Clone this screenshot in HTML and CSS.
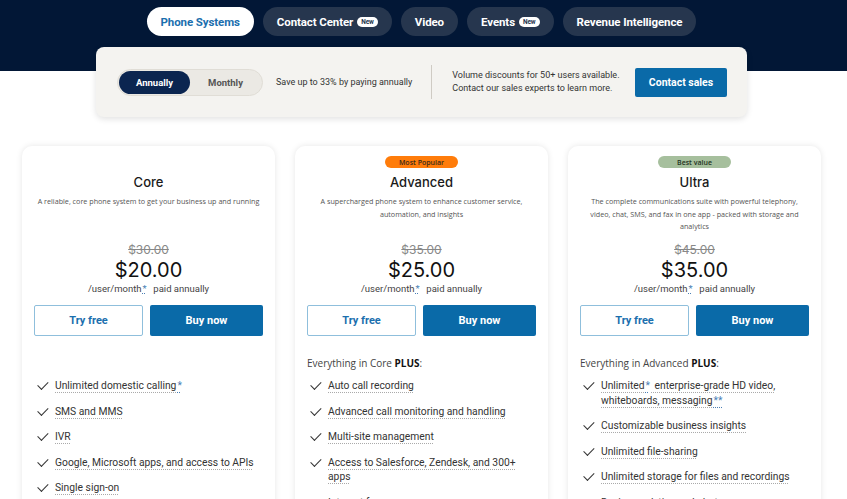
FILE: index.html
```html
<!DOCTYPE html>
<html>
<head>
<meta charset="utf-8">
<link rel="stylesheet" href="styles.css">
</head>
<body>
<header class="band">
  <div class="wrap">
    <nav class="tabs">
      <a class="tab active">Phone Systems</a>
      <a class="tab">Contact Center <span class="new">New</span></a>
      <a class="tab">Video</a>
      <a class="tab">Events <span class="new">New</span></a>
      <a class="tab">Revenue Intelligence</a>
    </nav>
  </div>
</header>
<main class="wrap">
  <section class="panel">
    <div class="toggle">
      <span class="opt on">Annually</span>
      <span class="opt">Monthly</span>
    </div>
    <p class="save">Save up to 33% by paying annually</p>
    <div class="divider"></div>
    <p class="volume">Volume discounts for 50+ users available.<br>Contact our sales experts to learn more.</p>
    <a class="contact">Contact sales</a>
  </section>

  <section class="cards">
    <article class="card">
      <div class="badge-row"></div>
      <h2 class="title">Core</h2>
      <p class="desc">A reliable, core phone system to get your business up and running</p>
      <div class="price">
        <s class="old">$30.00</s>
        <div class="now">$20.00</div>
        <div class="per">/user/month<span class="ast">*</span>&nbsp; paid annually</div>
      </div>
      <div class="btns"><a class="try">Try free</a><a class="buy">Buy now</a></div>
      <p class="plus"></p>
      <ul class="feats">
        <li><span class="ck"></span><span class="ft">Unlimited domestic calling<span class="ast">*</span></span></li>
        <li><span class="ck"></span><span class="ft">SMS and MMS</span></li>
        <li><span class="ck"></span><span class="ft">IVR</span></li>
        <li><span class="ck"></span><span class="ft">Google, Microsoft apps, and access to APIs</span></li>
        <li><span class="ck"></span><span class="ft">Single sign-on</span></li>
        <li><span class="ck"></span><span class="ft">Team messaging and file sharing</span></li>
      </ul>
    </article>

    <article class="card">
      <div class="badge-row"><span class="badge orange">Most Popular</span></div>
      <h2 class="title">Advanced</h2>
      <p class="desc">A supercharged phone system to enhance customer service, automation, and insights</p>
      <div class="price">
        <s class="old">$35.00</s>
        <div class="now">$25.00</div>
        <div class="per">/user/month<span class="ast">*</span>&nbsp; paid annually</div>
      </div>
      <div class="btns"><a class="try">Try free</a><a class="buy">Buy now</a></div>
      <p class="plus">Everything in Core <b>PLUS</b>:</p>
      <ul class="feats">
        <li><span class="ck"></span><span class="ft">Auto call recording</span></li>
        <li><span class="ck"></span><span class="ft">Advanced call monitoring and handling</span></li>
        <li><span class="ck"></span><span class="ft">Multi-site management</span></li>
        <li><span class="ck"></span><span class="ft">Access to Salesforce, Zendesk, and 300+ apps</span></li>
        <li><span class="ck"></span><span class="ft">Internet fax</span></li>
      </ul>
    </article>

    <article class="card">
      <div class="badge-row"><span class="badge green">Best value</span></div>
      <h2 class="title">Ultra</h2>
      <p class="desc">The complete communications suite with powerful telephony, video, chat, SMS, and fax in one app - packed with storage and analytics</p>
      <div class="price">
        <s class="old">$45.00</s>
        <div class="now">$35.00</div>
        <div class="per">/user/month<span class="ast">*</span>&nbsp; paid annually</div>
      </div>
      <div class="btns"><a class="try">Try free</a><a class="buy">Buy now</a></div>
      <p class="plus">Everything in Advanced <b>PLUS</b>:</p>
      <ul class="feats">
        <li><span class="ck"></span><span class="ft">Unlimited<span class="ast">*</span> enterprise-grade HD video, whiteboards, messaging<span class="ast">**</span></span></li>
        <li><span class="ck"></span><span class="ft">Customizable business insights</span></li>
        <li><span class="ck"></span><span class="ft">Unlimited file-sharing</span></li>
        <li><span class="ck"></span><span class="ft">Unlimited storage for files and recordings</span></li>
        <li><span class="ck"></span><span class="ft">Device analytics and alerts</span></li>
      </ul>
    </article>
  </section>
</main>
</body>
</html>
```

FILE: styles.css
```css
* { box-sizing: border-box; }
html, body { margin: 0; padding: 0; background: #fff; }
body { font-family: Roboto, "Liberation Sans", sans-serif; color: #222; overflow: hidden; }
p, h2, ul { margin: 0; padding: 0; }
a { text-decoration: none; cursor: pointer; }

.wrap { width: 843px; }

.band { background: #021736; height: 71px; }
.tabs { display: flex; justify-content: center; gap: 9px; padding-top: 7px; }
.tab {
  height: 29px; display: flex; align-items: center; gap: 4px;
  padding: 0 14px; border-radius: 15px;
  background: #26364e; color: #fff;
  font-weight: 700; font-size: 11.5px; letter-spacing: -0.1px;
}
.tab.active { background: #fff; color: #1b6fae; }
.new {
  background: #fff; color: #26364e; font-size: 6.5px; font-weight: 700;
  padding: 1px 4px; border-radius: 6px; line-height: 8px;
}

.panel {
  width: 651px; height: 70px; margin: -24px 0 0 96px;
  background: #f4f3f0; border-radius: 8px;
  box-shadow: 0 2px 6px rgba(0,0,0,0.12);
  display: flex; align-items: center; padding: 0 20px 0 21px;
  white-space: nowrap;
}
.toggle {
  display: flex; align-items: center; width: 146px; height: 27px;
  background: #ebe9e4; border: 1px solid #e0ddd6; border-radius: 14px; padding: 1px;
}
.opt { flex: 0 0 71px; height: 23px; display: flex; align-items: center; justify-content: center;
  font-size: 9.5px; font-weight: 700; color: #555; border-radius: 12px; }
.opt + .opt { flex: 1; }
.opt.on { background: #0b2550; color: #fff; }
.save { margin-left: 13px; font-size: 9px; color: #333; }
.divider { width: 1px; height: 34px; background: #cfcbc4; margin: 0 20px 0 19px; }
.volume { font-size: 9px; line-height: 13px; color: #333; }
.contact {
  margin-left: auto; width: 92px; height: 29px; background: #0a6aa8; color: #fff;
  font-size: 10.5px; font-weight: 700; border-radius: 2px;
  display: flex; align-items: center; justify-content: center;
}

.cards {
  display: grid; grid-template-columns: repeat(3, 253px); gap: 20px;
  margin: 29px 0 0 22px;
}
.card {
  background: #fff; border-radius: 10px; padding: 10px 12px 20px;
  box-shadow: 0 0 6px rgba(0,0,0,0.10);
  font-family: "Open Sans", "Noto Sans", sans-serif;
}
.badge-row { height: 12px; display: flex; justify-content: center; }
.badge { width: 73px; height: 12px; border-radius: 6px; font-size: 7px; font-weight: 600;
  display: flex; align-items: center; justify-content: center; color: #3a2a1a; }
.orange { background: #ff7c0a; }
.green { background: #a6bf9d; color: #243322; }
.title { margin-top: 5px; text-align: center; font-family: Inter, sans-serif; font-weight: 500;
  font-size: 13px; line-height: 18px; color: #1a1a1a; }
.desc { margin-top: 4px; height: 47px; text-align: center; font-size: 7.2px; line-height: 12.5px; color: #555; padding: 0 2px; }
.price { text-align: center; font-family: Inter, sans-serif; }
.old { display: block; font-size: 12px; line-height: 16px; color: #888; }
.now { font-size: 20px; line-height: 24px; color: #111; }
.per { font-family: Roboto, sans-serif; font-size: 9.5px; line-height: 13px; color: #444; }
.ast { color: #4a7fb5; text-decoration: underline dotted; margin: 0 2px 0 1px; }
.btns { display: grid; grid-template-columns: 109px 1fr; gap: 7px; margin-top: 10px; }
.btns a { height: 31px; display: flex; align-items: center; justify-content: center;
  font-family: Roboto, sans-serif; font-weight: 700; font-size: 11px; border-radius: 2px; }
.try { border: 1px solid #8fbfdc; color: #1b6fae; }
.buy { background: #0a6aa8; color: #fff; }
.plus { margin-top: 20px; height: 15px; font-size: 10px; line-height: 15px; color: #444; }
.plus b { color: #111; }
.feats { list-style: none; margin-top: 8px; padding-left: 2px; display: flex; flex-direction: column; gap: 11px; }
.feats li { display: flex; gap: 8px; font-family: Roboto, sans-serif; font-size: 10.3px; line-height: 14.5px; color: #333; }
.ck { flex: 0 0 11px; height: 14.5px; position: relative; }
.ck::after { content: ""; position: absolute; left: 1px; top: 3px; width: 9px; height: 4.5px;
  border-left: 1.2px solid #333; border-bottom: 1.2px solid #333; transform: rotate(-45deg) translate(1px,0); }
.ft { text-decoration: underline dotted #aaa; text-underline-offset: 3px; }
```
